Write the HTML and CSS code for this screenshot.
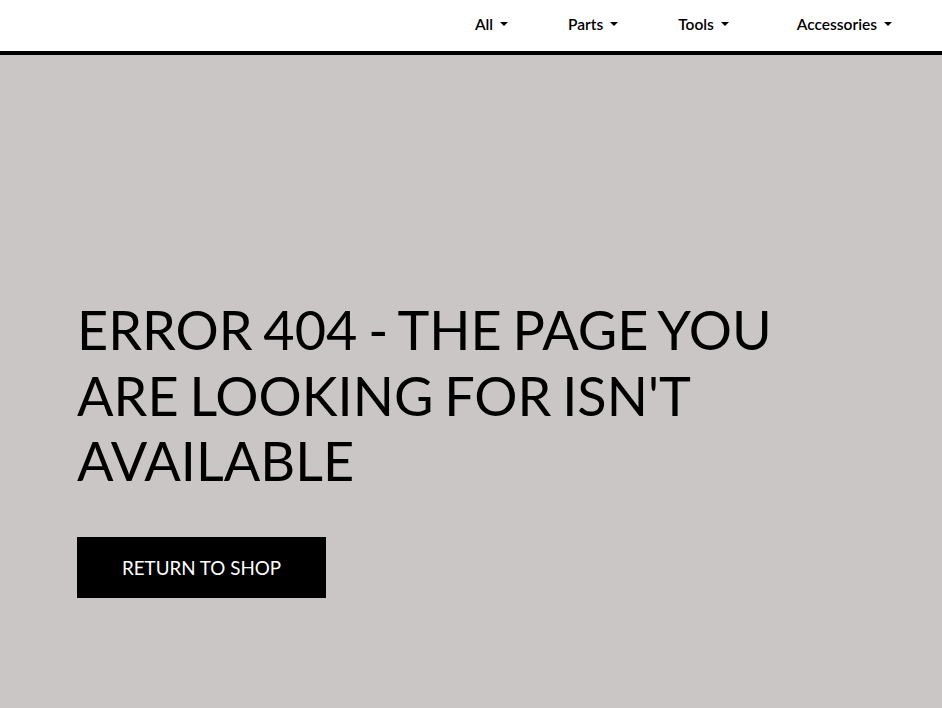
FILE: index.html
```html
<!DOCTYPE html>
<html>
<head>
<meta charset="utf-8">
<link rel="stylesheet" href="styles.css">
</head>
<body>
<header class="topbar">
  <nav class="nav">
    <a class="nav-link" href="#">All<span class="caret"></span></a>
    <a class="nav-link" href="#">Parts<span class="caret"></span></a>
    <a class="nav-link" href="#">Tools<span class="caret"></span></a>
    <a class="nav-link nav-last" href="#">Accessories<span class="caret"></span></a>
  </nav>
</header>
<main class="hero">
  <h1 class="title">ERROR 404 - THE PAGE YOU ARE LOOKING FOR ISN'T AVAILABLE</h1>
  <a class="btn" href="#">RETURN TO SHOP</a>
</main>
</body>
</html>
```
FILE: styles.css
```css
html, body {
  margin: 0;
  padding: 0;
  height: 100%;
}
body {
  font-family: Lato, "Open Sans", sans-serif;
  background: #cac6c6;
  color: #000;
}
.topbar {
  background: #fff;
  height: 51px;
  box-sizing: content-box;
  border-bottom: 4px solid #000;
  display: flex;
  justify-content: flex-end;
  align-items: center;
}
.nav {
  display: flex;
  align-items: center;
  gap: 60px;
  padding-right: 50px;
  padding-bottom: 3px;
}
.nav-link {
  color: #000;
  text-decoration: none;
  font-size: 15.5px;
  font-weight: 600;
  display: flex;
  align-items: center;
}
.nav-last {
  margin-left: 8px;
}
.caret {
  display: inline-block;
  margin-left: 7px;
  border-top: 4.5px solid #000;
  border-left: 4px solid transparent;
  border-right: 4px solid transparent;
  margin-top: -1px;
}
.hero {
  padding: 242px 0 0 77px;
}
.title {
  margin: 0;
  font-size: 54px;
  line-height: 65.5px;
  font-weight: 400;
  word-spacing: -3px;
  max-width: 740px;
}
.btn {
  display: inline-block;
  margin-top: 43px;
  background: #000;
  color: #fff;
  text-decoration: none;
  font-size: 18.8px;
  line-height: 25px;
  padding: 18px 45px;
}
```
